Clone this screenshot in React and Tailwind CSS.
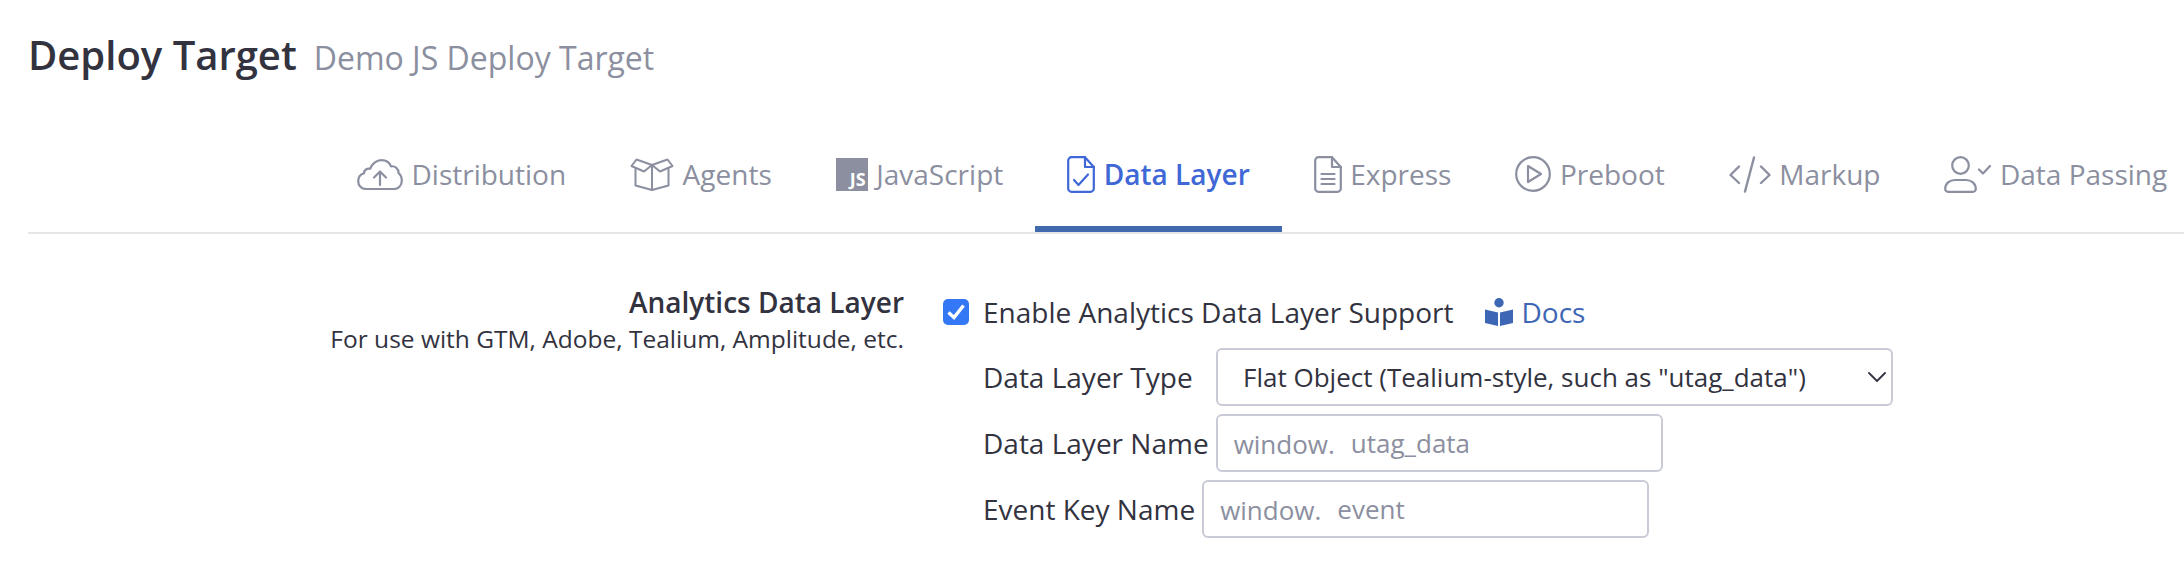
const CloudIcon = () => (
  <svg className="shrink-0" width="46" height="31" viewBox="0 0 46 31" fill="none" stroke="currentColor" strokeWidth="2.2" strokeLinecap="round" strokeLinejoin="round">
    <path d="M9 30C4.500 30 1.200 26.500 1.200 22.200c0-3.700 2.400-6.800 5.800-7.900C7.100 11 10.200 9 13.200 9.800 14.800 4.500 19.500 1.200 24.500 1.200c4.500 0 8 2.500 9.500 6.200 4-.8 7.800 2.400 7.500 6.800 2.100 1.500 3.300 4.300 3.300 7.500 0 4.800-3.500 8.300-8 8.300Z" />
    <path d="M23 26V12.500M17 18.500l6-6 6 6" />
  </svg>
);

const BoxIcon = () => (
  <svg className="shrink-0" width="44" height="33" viewBox="0 0 44 33" fill="none" stroke="currentColor" strokeWidth="2" strokeLinecap="round" strokeLinejoin="round">
    <path d="M5.500 10v17.500L22 32l16.500-4.500V10" />
    <path d="M22 7v25" />
    <path d="M22 7 6.500 1.500 1.500 8 14 13.500 22 7 30 13.500 42.500 8 37.500 1.500 22 7Z" />
  </svg>
);

const JsIcon = () => (
  <span className="flex h-[33px] w-[32px] shrink-0 items-end justify-end bg-[#8b8fa0] pr-[2px] text-[18px] leading-[23px] font-bold text-white">
    JS
  </span>
);

const DocCheckIcon = () => (
  <svg className="shrink-0" width="28" height="37" viewBox="0 0 28 37" fill="none" stroke="currentColor" strokeWidth="2.2" strokeLinecap="round" strokeLinejoin="round">
    <path d="M18 1.200H4.500A3.300 3.300 0 0 0 1.200 4.500v28a3.300 3.300 0 0 0 3.300 3.300h19a3.300 3.300 0 0 0 3.300-3.300V11Z" />
    <path d="M18 1.200V11h9.800" />
    <path d="m7 24 4.500 5L21 18.500" />
  </svg>
);

const DocLinesIcon = () => (
  <svg className="shrink-0" width="28" height="37" viewBox="0 0 28 37" fill="none" stroke="currentColor" strokeWidth="2.2" strokeLinecap="round" strokeLinejoin="round">
    <path d="M18 1.200H4.500A3.300 3.300 0 0 0 1.200 4.500v28a3.300 3.300 0 0 0 3.300 3.300h19a3.300 3.300 0 0 0 3.300-3.300V11Z" />
    <path d="M18 1.200V11h9.800" />
    <path d="M7.500 18h13M7.500 23h13M7.500 28h13" />
  </svg>
);

const PlayIcon = () => (
  <svg className="shrink-0" width="36" height="36" viewBox="0 0 36 36" fill="none" stroke="currentColor" strokeWidth="2.2" strokeLinecap="round" strokeLinejoin="round">
    <circle cx="18" cy="18" r="16.800" />
    <path d="M13 10 26 18l-13 8Z" />
  </svg>
);

const CodeIcon = () => (
  <svg className="shrink-0" width="42" height="37" viewBox="0 0 42 37" fill="none" stroke="currentColor" strokeWidth="2.4" strokeLinecap="round" strokeLinejoin="round">
    <path d="M10 10.500 1.500 19l8.500 8M32 10.500l8.500 8.500-8.500 8M25 1.500 16 35.500" />
  </svg>
);

const UserCheckIcon = () => (
  <svg className="shrink-0" width="47" height="37" viewBox="0 0 47 37" fill="none" stroke="currentColor" strokeWidth="2.2" strokeLinecap="round" strokeLinejoin="round">
    <circle cx="16.500" cy="9.500" r="8.300" />
    <path d="M4 35.800a2.800 2.800 0 0 1-2.800-2.800c0-5.500 4.500-9 9.800-9h11c5.300 0 9.800 3.500 9.800 9a2.800 2.800 0 0 1-2.800 2.800Z" />
    <path d="m35 13.500 4 4L46 10" />
  </svg>
);

const DocsIcon = () => (
  <svg width="28" height="28" viewBox="0 0 28 28" fill="currentColor">
    <circle cx="14" cy="4.700" r="4.700" />
    <path d="M0 11.500 13 14.500V28L0 25ZM28 11.500 15 14.500V28L28 25Z" />
  </svg>
);

const tabs = [
  { label: "Distribution", icon: <CloudIcon /> },
  { label: "Agents", icon: <BoxIcon /> },
  { label: "JavaScript", icon: <JsIcon /> },
  { label: "Data Layer", icon: <DocCheckIcon />, active: true },
  { label: "Express", icon: <DocLinesIcon /> },
  { label: "Preboot", icon: <PlayIcon /> },
  { label: "Markup", icon: <CodeIcon /> },
  { label: "Data Passing", icon: <UserCheckIcon /> },
];

function Tab({ label, icon, active }) {
  return (
    <div
      className={
        active
          ? "-mb-[2px] flex h-[82px] items-center gap-[8.5px] border-b-[6px] border-[#4169ae] px-8 pb-[28px] font-semibold whitespace-nowrap text-[#3f68d6]"
          : "flex h-[82px] items-center gap-[8.5px] px-8 pb-[34px] whitespace-nowrap text-[#8b8fa0]"
      }
    >
      {icon}
      <span>{label}</span>
    </div>
  );
}

function WindowInput({ value }) {
  return (
    <div className="flex h-[58px] w-[447px] items-center rounded-[6px] border-2 border-[#c9cbd6] pl-4 text-[#8b8fa0]">
      <span className="pt-[3px] text-[26px]">window.</span>
      <span className="ml-[16px] text-[26px]">{value}</span>
    </div>
  );
}

export default function App() {
  return (
    <div className="min-h-screen overflow-hidden bg-white pl-7 font-['Open_Sans',sans-serif] text-[#32333f]">
      <div className="flex h-[150px] items-baseline pt-[25px]">
        <h1 className="text-[40px] font-semibold">Deploy Target</h1>
        <span className="ml-[17px] text-[32px] text-[#8b8fa0]">Demo JS Deploy Target</span>
      </div>

      <div className="flex border-b-2 border-[#e6e6e6] pl-[297px] text-[28px]">
        {tabs.map((tab) => (
          <Tab key={tab.label} {...tab} />
        ))}
      </div>

      <div className="flex pt-[48px]">
        <div className="w-[876px] pt-[2px] text-right">
          <div className="text-[28px] leading-[36px] font-semibold">Analytics Data Layer</div>
          <div className="text-[24.5px] leading-[38px]">For use with GTM, Adobe, Tealium, Amplitude, etc.</div>
        </div>

        <div className="ml-[39px] flex flex-col text-[28px]">
          <div className="mb-[6px] flex h-[60px] items-center">
            <span className="flex h-[26px] w-[26px] items-center justify-center rounded-[5px] bg-[#3478f6]">
              <svg width="20" height="18" viewBox="0 0 20 18" fill="none" stroke="white" strokeWidth="3.4">
                <path d="m2.500 9.500 5.500 5L17.500 2.500" />
              </svg>
            </span>
            <span className="ml-[14px]">Enable Analytics Data Layer Support</span>
            <span className="ml-8 flex items-center gap-2 text-[#3d66b4]">
              <DocsIcon />
              <span>Docs</span>
            </span>
          </div>

          <div className="ml-[40px] flex flex-col gap-2">
            <div className="flex items-center">
              <span className="w-[233px]">Data Layer Type</span>
              <div className="relative">
                <select className="h-[58px] w-[677px] appearance-none rounded-[6px] border-2 border-[#c9cbd6] bg-white pl-[25px] text-[26px] text-[#32333f]">
                  <option>Flat Object (Tealium-style, such as "utag_data")</option>
                </select>
                <svg className="absolute top-[24px] right-[7px]" width="18" height="10" viewBox="0 0 18 10" fill="none" stroke="#32333f" strokeWidth="1.8" strokeLinecap="round" strokeLinejoin="round">
                  <path d="m1 1 8 8 8-8" />
                </svg>
              </div>
            </div>
            <div className="flex items-center gap-[7px]">
              <span>Data Layer Name</span>
              <WindowInput value="utag_data" />
            </div>
            <div className="flex items-center gap-[7px]">
              <span>Event Key Name</span>
              <WindowInput value="event" />
            </div>
          </div>
        </div>
      </div>
    </div>
  );
}
